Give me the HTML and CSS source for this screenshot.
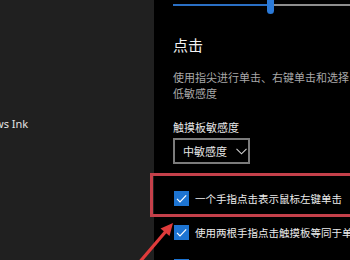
FILE: index.html
```html
<!DOCTYPE html>
<html lang="zh-CN">
<head>
<meta charset="utf-8">
<title>触摸板</title>
<link rel="stylesheet" href="styles.css">
</head>
<body>
<div class="screen">
  <aside class="nav">
    <div class="nav-item">Windows Ink</div>
  </aside>
  <main class="content">
    <div class="slider">
      <div class="track-fill"></div>
      <div class="thumb"></div>
      <div class="track-rest"></div>
    </div>
    <h2 class="heading">点击</h2>
    <p class="desc">使用指尖进行单击、右键单击和选择，<br>低敏感度</p>
    <div class="label">触摸板敏感度</div>
    <div class="dropdown">
      <span>中敏感度</span>
      <svg class="chev" width="11" height="7" viewBox="0 0 11 7"><polyline points="0.5,0.8 5.5,5.8 10.5,0.8" fill="none" stroke="#cfcfcf" stroke-width="1.1"/></svg>
    </div>
    <div class="checks">
      <div class="check-row">
        <span class="box"><svg width="15" height="15" viewBox="0 0 15 15"><polyline points="3,7.8 6,10.8 12.2,4.4" fill="none" stroke="#fff" stroke-width="1.2"/></svg></span>
        <span class="check-text">一个手指点击表示鼠标左键单击</span>
      </div>
      <div class="check-row">
        <span class="box"><svg width="15" height="15" viewBox="0 0 15 15"><polyline points="3,7.8 6,10.8 12.2,4.4" fill="none" stroke="#fff" stroke-width="1.2"/></svg></span>
        <span class="check-text">使用两根手指点击触摸板等同于单击鼠标右键</span>
      </div>
      <div class="check-row">
        <span class="box"><svg width="15" height="15" viewBox="0 0 15 15"><polyline points="3,7.8 6,10.8 12.2,4.4" fill="none" stroke="#fff" stroke-width="1.2"/></svg></span>
        <span class="check-text">点击两次并拖动以多选</span>
      </div>
    </div>
  </main>
  <div class="mark-box"></div>
  <svg class="mark-arrow" width="350" height="260" viewBox="0 0 350 260">
    <line x1="138" y1="264" x2="167" y2="230" stroke="#e03b3b" stroke-width="3.2"/>
    <polygon points="173,223 169.5,236 160.5,228.5" fill="#e03b3b"/>
  </svg>
</div>
</body>
</html>
```

FILE: styles.css
```css
html, body {
  margin: 0;
  padding: 0;
  background: #000;
}
.screen {
  position: relative;
  width: 350px;
  height: 260px;
  overflow: hidden;
  display: flex;
  font-family: "Noto Sans CJK SC", "Noto Sans", sans-serif;
}
.nav {
  width: 154px;
  flex: none;
  background: #202020;
  padding-top: 116px;
  overflow: hidden;
}
.nav-item {
  font-family: "Noto Sans", "Noto Sans CJK SC", sans-serif;
  font-size: 11px;
  line-height: 16px;
  color: #e4e4e4;
  white-space: nowrap;
  text-indent: -38px;
}
.content {
  flex: 1;
  min-width: 0;
  padding-left: 19px;
  overflow: hidden;
  color: #e8e8e8;
}
.slider {
  display: flex;
  align-items: flex-start;
  height: 14px;
}
.track-fill {
  width: 94px;
  height: 2px;
  margin-top: 4px;
  background: #2a6fc4;
}
.thumb {
  width: 7px;
  height: 14px;
  border-radius: 0 0 4px 4px;
  background: #2b7ad8;
}
.track-rest {
  flex: 1;
  height: 2px;
  margin-top: 4px;
  background: #8e8e8e;
}
.heading {
  margin: 21px 0 0;
  font-size: 15px;
  line-height: 20px;
  font-weight: normal;
  color: #f2f2f2;
}
.desc {
  margin: 14px 0 0;
  font-size: 11px;
  line-height: 16px;
  color: #a8a8a8;
  white-space: nowrap;
}
.label {
  margin-top: 18px;
  font-size: 11px;
  line-height: 16px;
  color: #e6e6e6;
}
.dropdown {
  margin-top: 3px;
  width: 77px;
  height: 26px;
  box-sizing: border-box;
  border: 2px solid #7c7c7c;
  display: flex;
  align-items: center;
  padding-left: 8px;
  gap: 9px;
  font-size: 11px;
  color: #e6e6e6;
}
.chev {
  display: block;
}
.checks {
  margin-top: 17px;
}
.check-row {
  height: 34px;
  display: flex;
  align-items: center;
  gap: 6px;
  white-space: nowrap;
}
.box {
  width: 15px;
  height: 15px;
  flex: none;
  margin-left: 1px;
  background: #1d74d2;
  display: flex;
}
.check-text {
  font-size: 10.5px;
  color: #ececec;
}
.mark-box {
  position: absolute;
  left: 150px;
  top: 173px;
  width: 230px;
  height: 44px;
  box-sizing: border-box;
  border: 3px solid #c4404a;
}
.mark-arrow {
  position: absolute;
  left: 0;
  top: 0;
}
```
